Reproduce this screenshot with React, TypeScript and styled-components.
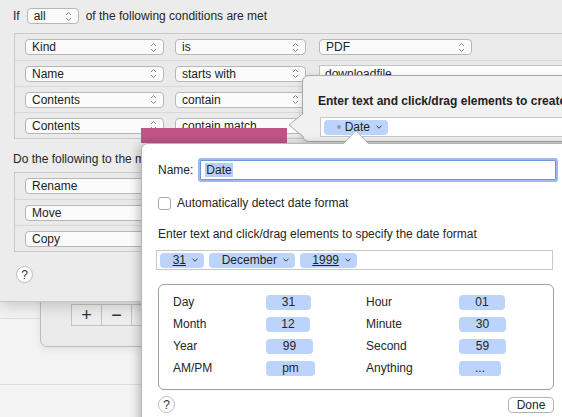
import React from "react";
import styled, { createGlobalStyle } from "styled-components";

const GlobalStyle = createGlobalStyle`
  html, body { margin: 0; padding: 0; }
  body {
    font-family: "Liberation Sans", Arial, sans-serif;
    font-size: 12px;
    color: #262626;
  }
`;

const Desktop = styled.div`
  position: relative;
  width: 562px;
  height: 417px;
  overflow: hidden;
  background: #f3f3f3;
`;

/* window behind everything */
const BackList = styled.div`
  position: absolute;
  top: 302px;
  left: 0;
  width: 562px;
  display: flex;
  flex-direction: column;
`;

const BackRow = styled.div<{ $h: number }>`
  height: ${(p) => p.$h}px;
  border-bottom: 1px solid #dcdcdc;
`;

const MiddleSheet = styled.div`
  position: absolute;
  left: 40px;
  top: 240px;
  width: 260px;
  height: 107px;
  background: #ebebeb;
  border: 1px solid #bdbdbd;
  border-radius: 0 0 0 7px;
  padding: 63px 0 0 31px;
  box-sizing: border-box;
  box-shadow: 0 2px 8px rgba(0, 0, 0, 0.08);
`;

const SegGroup = styled.div`
  display: flex;
`;

const SegButton = styled.div`
  width: 31px;
  height: 22px;
  box-sizing: border-box;
  border: 1px solid #c2c2c2;
  margin-left: -1px;
  background: #ededed;
  display: flex;
  align-items: center;
  justify-content: center;
  font-size: 18px;
  font-weight: 300;
  color: #333;
`;

/* main rule sheet */
const MainSheet = styled.div`
  position: absolute;
  top: 0;
  left: 0;
  width: 562px;
  height: 302px;
  box-sizing: border-box;
  background: #ececec;
  border-bottom: 1px solid #c6c6c6;
  box-shadow: 0 4px 14px rgba(0, 0, 0, 0.18);
  padding: 8px 0 0 13px;
  display: flex;
  flex-direction: column;
  overflow: hidden;
`;

const Line = styled.div`
  display: flex;
  align-items: center;
  gap: 7px;
  height: 16px;
  white-space: nowrap;
`;

const RuleBox = styled.div<{ $top: number }>`
  margin: ${(p) => p.$top}px 0 0 1px;
  width: 620px;
  border: 1px solid #cacaca;
  background: #eaeaea;
  display: flex;
  flex-direction: column;
`;

const RuleRow = styled.div`
  height: 26px;
  display: flex;
  align-items: center;
  padding-left: 10px;
  gap: 11px;
  & + & {
    border-top: 1px solid #d8d8d8;
    height: 25px;
  }
`;

const Popup = styled.div<{ $w: number }>`
  width: ${(p) => p.$w}px;
  height: 16px;
  box-sizing: border-box;
  flex: 0 0 auto;
  background: #fbfbfb;
  border: 1px solid #b7b7b7;
  border-radius: 4px;
  display: flex;
  align-items: center;
  justify-content: space-between;
  padding: 0 6px 0 6px;
  font-size: 12px;
  color: #222;
`;

const TextField = styled.div<{ $w: number }>`
  width: ${(p) => p.$w}px;
  height: 18px;
  box-sizing: border-box;
  flex: 0 0 auto;
  background: #fff;
  border: 1px solid #c3c3c3;
  padding: 1px 5px;
  font-size: 12px;
`;

const SectionLabel = styled.div`
  margin-top: 13px;
  width: 128px;
  overflow: hidden;
  height: 14px;
  line-height: 14px;
  white-space: nowrap;
`;

const HelpButton = styled.div<{ $top?: number; $left?: number }>`
  margin: ${(p) => p.$top ?? 0}px 0 0 ${(p) => p.$left ?? 0}px;
  width: 17px;
  height: 17px;
  box-sizing: border-box;
  border-radius: 50%;
  border: 1px solid #bdbdbd;
  background: #fff;
  display: flex;
  align-items: center;
  justify-content: center;
  font-size: 12px;
  color: #333;
  flex: 0 0 auto;
`;

const Highlight = styled.div`
  position: absolute;
  left: 141px;
  top: 128px;
  width: 146px;
  height: 15px;
  background: #bf5587;
`;

/* first popover */
const PopoverOne = styled.div`
  position: absolute;
  left: 302px;
  top: 75px;
  width: 300px;
  height: 67px;
  box-sizing: border-box;
  background: #f1f1f1;
  border: 1px solid #a9a9a9;
  border-radius: 7px;
  padding: 18px 0 0 15px;
  box-shadow: 0 2px 8px rgba(0, 0, 0, 0.15);
`;

const Arrow = styled.svg`
  position: absolute;
  overflow: visible;
`;

const BoldTitle = styled.div`
  font-weight: bold;
  font-size: 12px;
  width: 245px;
  overflow: hidden;
  white-space: nowrap;
  color: #222;
`;

const TokenField = styled.div<{ $w: number; $top: number; $left?: number }>`
  margin: ${(p) => p.$top}px 0 0 ${(p) => p.$left ?? 0}px;
  width: ${(p) => p.$w}px;
  height: 20px;
  box-sizing: border-box;
  background: #fff;
  border: 1px solid #c8c8c8;
  display: flex;
  align-items: center;
  gap: 5px;
  padding-left: 3px;
`;

const Token = styled.div<{ $w: number }>`
  width: ${(p) => p.$w}px;
  height: 15px;
  box-sizing: border-box;
  background: #bcd3fb;
  border-radius: 4px;
  display: flex;
  align-items: center;
  justify-content: flex-end;
  gap: 6px;
  padding-right: 6px;
  font-size: 12px;
  color: #1e1e1e;
`;

const Under = styled.span`
  text-decoration: underline;
`;

const TokenLabel = styled.span`
  display: flex;
  align-items: center;
  gap: 3px;
`;

const Dot = styled.span`
  width: 4px;
  height: 4px;
  border-radius: 50%;
  background: #8d9bb3;
  margin-right: 1px;
`;

/* second popover */
const PopoverTwo = styled.div`
  position: absolute;
  left: 141px;
  top: 143px;
  width: 440px;
  height: 290px;
  box-sizing: border-box;
  background: #ffffff;
  border: 1px solid #b6b6b6;
  border-radius: 7px 0 0 0;
  box-shadow: -3px 0 10px rgba(0, 0, 0, 0.22);
  padding: 16px 0 0 16px;
  display: flex;
  flex-direction: column;
`;

const NameRow = styled.div`
  display: flex;
  align-items: center;
  gap: 7px;
  height: 20px;
`;

const FocusField = styled.div`
  width: 356px;
  height: 20px;
  box-sizing: border-box;
  border: 1px solid #6f97e0;
  box-shadow: 0 0 0 2px #9dbaf0;
  border-radius: 1px;
  background: #fff;
  display: flex;
  align-items: center;
  padding-left: 4px;
`;

const Selected = styled.span`
  background: #b5cffa;
  padding: 0 1px;
`;

const CheckRow = styled.label`
  display: flex;
  align-items: center;
  gap: 6px;
  margin-top: 16px;
  height: 14px;
`;

const CheckBox = styled.span`
  width: 13px;
  height: 13px;
  box-sizing: border-box;
  border: 1px solid #a9a9a9;
  border-radius: 3px;
  background: #fff;
`;

const Plain = styled.div<{ $top: number }>`
  margin-top: ${(p) => p.$top}px;
  height: 14px;
  white-space: nowrap;
`;

const GroupBox = styled.div`
  margin-top: 14px;
  width: 396px;
  height: 106px;
  box-sizing: border-box;
  border: 1px solid #9f9f9f;
  border-radius: 6px;
  padding: 10px 0 0 14px;
  display: grid;
  grid-template-columns: 93px 100px 93px 100px;
  grid-auto-rows: 14px;
  row-gap: 8px;
  align-items: center;
`;

const FieldToken = styled.div<{ $w: number }>`
  width: ${(p) => p.$w}px;
  height: 15px;
  background: #bcd3fb;
  border-radius: 4px;
  display: flex;
  align-items: center;
  justify-content: center;
  font-size: 12px;
`;

const Footer = styled.div`
  margin-top: 6px;
  width: 396px;
  display: flex;
  align-items: center;
  justify-content: space-between;
`;

const PushButton = styled.div`
  width: 46px;
  height: 16px;
  box-sizing: border-box;
  border: 1px solid #b3b3b3;
  border-radius: 4px;
  background: #fff;
  display: flex;
  align-items: center;
  justify-content: center;
  font-size: 12px;
`;

const UpDown = () => (
  <svg width="7" height="11" viewBox="0 0 7 11">
    <path d="M1 4 L3.5 1.5 L6 4 M1 7 L3.5 9.5 L6 7" fill="none" stroke="#8a8a8a" strokeWidth="1" />
  </svg>
);

const Chevron = () => (
  <svg width="6" height="4" viewBox="0 0 6 4">
    <path d="M0.5 0.8 L3 3.2 L5.5 0.8" fill="none" stroke="#3a3a3a" strokeWidth="1" />
  </svg>
);

const rules: [string, string, string | null][] = [
  ["Kind", "is", "PDF"],
  ["Name", "starts with", null],
  ["Contents", "contain", null],
  ["Contents", "contain match", null],
];

const fields: [string, string, number, string, string, number][] = [
  ["Day", "31", 45, "Hour", "01", 46],
  ["Month", "12", 44, "Minute", "30", 47],
  ["Year", "99", 47, "Second", "59", 47],
  ["AM/PM", "pm", 49, "Anything", "...", 42],
];

export default function App() {
  return (
    <>
      <GlobalStyle />
      <Desktop>
        <BackList>
          <BackRow $h={16} />
          <BackRow $h={65} />
        </BackList>

        <MiddleSheet>
          <SegGroup>
            <SegButton>+</SegButton>
            <SegButton>−</SegButton>
            <SegButton />
          </SegGroup>
        </MiddleSheet>

        <MainSheet>
          <Line>
            <span>If</span>
            <Popup $w={52}>
              all <UpDown />
            </Popup>
            <span>of the following conditions are met</span>
          </Line>
          <RuleBox $top={9}>
            {rules.map(([a, b, c], i) => (
              <RuleRow key={i}>
                <Popup $w={139}>
                  {a} <UpDown />
                </Popup>
                <Popup $w={131} style={{ marginRight: 2 }}>
                  {b} <UpDown />
                </Popup>
                {c ? (
                  <Popup $w={153}>
                    {c} <UpDown />
                  </Popup>
                ) : i === 1 ? (
                  <TextField $w={260}>downloadfile</TextField>
                ) : null}
              </RuleRow>
            ))}
          </RuleBox>
          <SectionLabel>Do the following to the matched file or folder:</SectionLabel>
          <RuleBox $top={6}>
            {["Rename", "Move", "Copy"].map((a) => (
              <RuleRow key={a}>
                <Popup $w={139}>
                  {a} <UpDown />
                </Popup>
              </RuleRow>
            ))}
          </RuleBox>
          <HelpButton $top={14} $left={3}>?</HelpButton>
        </MainSheet>

        <Highlight />

        <PopoverOne>
          <Arrow width="16" height="24" style={{ left: -15, top: 37 }}>
            <path d="M16 0 L1 12 L16 24 Z" fill="#f1f1f1" />
            <path d="M15.5 0 L1 12 L15.5 24" fill="none" stroke="#a9a9a9" />
          </Arrow>
          <BoldTitle>Enter text and click/drag elements to create a custom token</BoldTitle>
          <TokenField $w={300} $top={9} $left={2}>
            <Token $w={64}>
              <TokenLabel>
                <Dot />
                Date
              </TokenLabel>
              <Chevron />
            </Token>
          </TokenField>
        </PopoverOne>

        <PopoverTwo>
          <Arrow width="26" height="14" style={{ left: 201, top: -14 }}>
            <path d="M0 14.5 L13 1 L26 14.5 Z" fill="#ffffff" />
            <path d="M0 14 L13 0.8 L26 14" fill="none" stroke="#b6b6b6" />
          </Arrow>
          <NameRow>
            <span>Name:</span>
            <FocusField>
              <Selected>Date</Selected>
            </FocusField>
          </NameRow>
          <CheckRow>
            <CheckBox />
            <span>Automatically detect date format</span>
          </CheckRow>
          <Plain $top={17}>Enter text and click/drag elements to specify the date format</Plain>
          <TokenField $w={397} $top={9} $left={-2}>
            <Token $w={44}>
              <Under>31</Under>
              <Chevron />
            </Token>
            <Token $w={86}>
              <span>December</span>
              <Chevron />
            </Token>
            <Token $w={57}>
              <Under>1999</Under>
              <Chevron />
            </Token>
          </TokenField>
          <GroupBox>
            {fields.map(([l1, v1, w1, l2, v2, w2]) => (
              <React.Fragment key={l1}>
                <span>{l1}</span>
                <FieldToken $w={w1}>{v1}</FieldToken>
                <span>{l2}</span>
                <FieldToken $w={w2}>{v2}</FieldToken>
              </React.Fragment>
            ))}
          </GroupBox>
          <Footer>
            <HelpButton>?</HelpButton>
            <PushButton>Done</PushButton>
          </Footer>
        </PopoverTwo>
      </Desktop>
    </>
  );
}
